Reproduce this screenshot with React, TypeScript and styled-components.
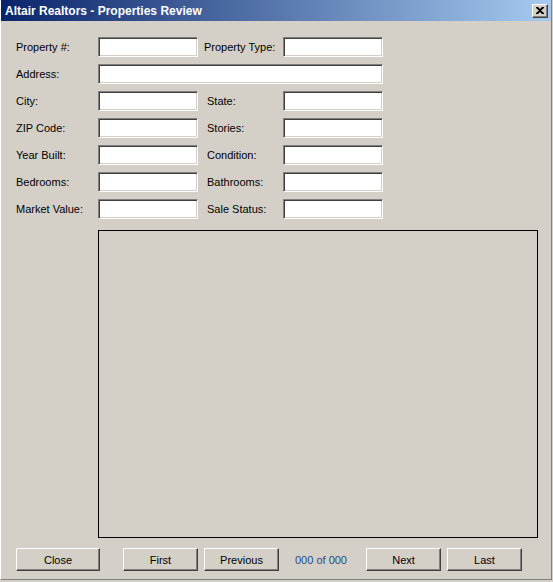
import React from "react";
import styled, { createGlobalStyle } from "styled-components";

const GlobalStyle = createGlobalStyle`
  html, body {
    margin: 0;
    padding: 0;
    background: #d4d0c8;
  }
  * {
    box-sizing: border-box;
  }
`;

const Window = styled.div`
  width: 552px;
  height: 580px;
  background: #d4d0c8;
  border-left: 1px solid #ffffff;
  border-right: 1px solid #808080;
  border-bottom: 1px solid #808080;
  font-family: "Liberation Sans", Arial, sans-serif;
  font-size: 11px;
  color: #000;
`;

const TitleBar = styled.div`
  height: 21px;
  display: flex;
  align-items: center;
  justify-content: space-between;
  padding: 0 3px 0 4px;
  background: linear-gradient(to right, #0a246a, #a6caf0);
`;

const Title = styled.span`
  color: #fff;
  font-weight: bold;
  font-size: 12px;
`;

const CloseBox = styled.div`
  width: 16px;
  height: 14px;
  display: flex;
  align-items: center;
  justify-content: center;
  background: #d4d0c8;
  border: 1px solid;
  border-color: #fff #404040 #404040 #fff;
  box-shadow: inset -1px -1px 0 #808080;
`;

const Body = styled.div`
  padding: 16px 0 0 15px;
`;

const Form = styled.div`
  display: grid;
  grid-template-columns: 82px 100px 85px 100px;
  grid-auto-rows: 20px;
  row-gap: 7px;
`;

const Label = styled.label<{ $indent?: number }>`
  display: flex;
  align-items: center;
  padding-left: ${({ $indent }) => $indent ?? 0}px;
  padding-bottom: 1px;
  white-space: nowrap;
`;

const Field = styled.input<{ $span?: number }>`
  grid-column: span ${({ $span }) => $span ?? 1};
  height: 20px;
  margin: 0;
  padding: 0 3px;
  background: #fff;
  border-style: solid;
  border-width: 1px;
  border-color: #808080 #ffffff #ffffff #808080;
  box-shadow: inset 1px 1px 0 #404040, inset -1px -1px 0 #d4d0c8;
  font: 11px "Liberation Sans", Arial, sans-serif;
  outline: none;
`;

const Picture = styled.div`
  margin: 11px 0 0 82px;
  width: 440px;
  height: 308px;
  border: 1px solid #000;
`;

const ButtonRow = styled.div`
  display: flex;
  align-items: center;
  margin-top: 10px;
`;

const Button = styled.button<{ $w?: number; $ml?: number }>`
  width: ${({ $w }) => $w ?? 75}px;
  height: 23px;
  margin: 0 0 0 ${({ $ml }) => $ml ?? 0}px;
  padding: 0;
  background: #d4d0c8;
  border: 1px solid;
  border-color: #fff #404040 #404040 #fff;
  box-shadow: inset -1px -1px 0 #808080;
  font: 11px "Liberation Sans", Arial, sans-serif;
  color: #000;
`;

const Counter = styled.span`
  width: 87px;
  padding-left: 16px;
  color: #1f4a88;
  font-size: 11px;
`;

const rows: [string, string][] = [
  ["City:", "State:"],
  ["ZIP Code:", "Stories:"],
  ["Year Built:", "Condition:"],
  ["Bedrooms:", "Bathrooms:"],
  ["Market Value:", "Sale Status:"],
];

export default function App() {
  return (
    <>
      <GlobalStyle />
      <Window>
        <TitleBar>
          <Title>Altair Realtors - Properties Review</Title>
          <CloseBox>
            <svg width="8" height="7" viewBox="0 0 8 7">
              <path d="M0 0h2l2 2 2-2h2v1L5 3.5 8 6v1H6L4 5 2 7H0V6l3-2.5L0 1z" fill="#000" />
            </svg>
          </CloseBox>
        </TitleBar>
        <Body>
          <Form>
            <Label>Property #:</Label>
            <Field />
            <Label $indent={6}>Property Type:</Label>
            <Field />
            <Label>Address:</Label>
            <Field $span={3} />
            {rows.map(([a, b]) => (
              <React.Fragment key={a}>
                <Label>{a}</Label>
                <Field />
                <Label $indent={9}>{b}</Label>
                <Field />
              </React.Fragment>
            ))}
          </Form>
          <Picture />
          <ButtonRow>
            <Button $w={84}>Close</Button>
            <Button $ml={23}>First</Button>
            <Button $ml={6}>Previous</Button>
            <Counter>000 of 000</Counter>
            <Button>Next</Button>
            <Button $ml={6}>Last</Button>
          </ButtonRow>
        </Body>
      </Window>
    </>
  );
}
